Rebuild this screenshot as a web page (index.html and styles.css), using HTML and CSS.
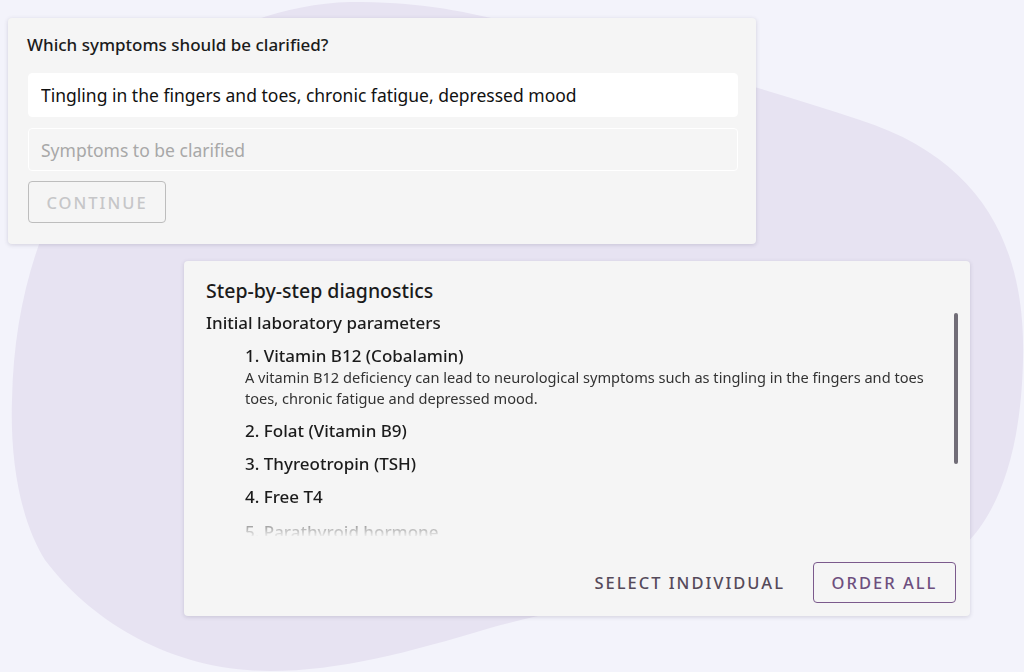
FILE: index.html
```html
<!DOCTYPE html>
<html lang="en">

<head>
    <meta charset="UTF-8">
    <title>Diagnostics assistant</title>
    <link rel="stylesheet" href="styles.css">
</head>

<body>
    <!-- Decorative background blob -->
    <svg class="blob" width="1024" height="672" viewBox="0 0 1024 672" aria-hidden="true">
        <path d="M 350 2 C 420 2, 460 10, 520 25 C 640 55, 740 80, 860 120 C 985 160, 1026 250, 1023 360 C 1021 450, 1000 510, 965 545 C 850 590, 640 585, 490 628 C 410 652, 340 671, 270 671 C 170 671, 90 620, 45 560 C 20 520, 10 460, 12 400 C 14 300, 40 220, 90 140 C 150 60, 250 5, 350 2 Z" fill="#e7e3f2"/>
    </svg>

    <!-- Symptoms card -->
    <div class="card symptoms">
        <h3 class="question">Which symptoms should be clarified?</h3>
        <input class="field filled" type="text" value="Tingling in the fingers and toes, chronic fatigue, depressed mood">
        <input class="field empty" type="text" placeholder="Symptoms to be clarified">
        <button class="btn-continue" disabled>CONTINUE</button>
    </div>

    <!-- Diagnostics card -->
    <div class="card diagnostics">
        <h2 class="diag-title">Step-by-step diagnostics</h2>
        <div class="scroll-area">
            <h4 class="group-title">Initial laboratory parameters</h4>
            <ol class="tests">
                <li>
                    <div class="test-name">1. Vitamin B12 (Cobalamin)</div>
                    <p class="test-desc">A vitamin B12 deficiency can lead to neurological symptoms such as tingling in the fingers and toes toes, chronic fatigue and depressed mood.</p>
                </li>
                <li><div class="test-name">2. Folat (Vitamin B9)</div></li>
                <li><div class="test-name">3. Thyreotropin (TSH)</div></li>
                <li><div class="test-name">4. Free T4</div></li>
                <li><div class="test-name">5. Parathyroid hormone</div></li>
            </ol>
        </div>
        <div class="scroll-thumb"></div>
        <div class="actions">
            <button class="btn-text">SELECT INDIVIDUAL</button>
            <button class="btn-outline">ORDER ALL</button>
        </div>
    </div>
</body>

</html>
```

FILE: styles.css
```css
/* Basic reset and styling */

* {
    margin: 0;
    padding: 0;
    box-sizing: border-box;
}

body {
    font-family: "Noto Sans", "Open Sans", sans-serif;
    background-color: #f3f3fb;
    color: #1b1b1b;
    width: 1024px;
    height: 672px;
    overflow: hidden;
    position: relative;
    padding-top: 18px;
}

.blob {
    position: absolute;
    left: 0;
    top: 0;
    z-index: 0;
}

.card {
    position: relative;
    z-index: 1;
    background: #f5f5f5;
    border-radius: 4px;
    box-shadow: 0 1px 4px rgba(60, 50, 90, 0.18);
}

/* Symptoms card */

.symptoms {
    width: 748px;
    margin-left: 8px;
    padding: 15px 18px 21px 20px;
    display: flex;
    flex-direction: column;
}

.question {
    font-size: 17px;
    font-weight: 500;
    line-height: 24px;
    margin-left: -1px;
    margin-bottom: 16px;
}

.field {
    font-family: inherit;
    font-size: 17.5px;
    height: 44px;
    padding: 0 12px;
    border-radius: 4px;
    outline: none;
    color: #111;
}

.field.filled {
    background: #fff;
    border: 1px solid #fff;
    margin-bottom: 11px;
}

.field.empty {
    background: transparent;
    border: 1px solid #fff;
    height: 43px;
    margin-bottom: 10px;
}

.field.empty::placeholder {
    color: #a8a8a8;
}

.btn-continue {
    align-self: flex-start;
    width: 138px;
    height: 42px;
    font-family: inherit;
    font-size: 16.5px;
    font-weight: 500;
    letter-spacing: 2px;
    color: #c6c6c8;
    background: transparent;
    border: 1px solid #bdbdbd;
    border-radius: 4px;
}

/* Diagnostics card */

.diagnostics {
    width: 786px;
    height: 355px;
    margin: 17px 0 0 184px;
    padding: 17px 14px 13px 22px;
    display: flex;
    flex-direction: column;
}

.diag-title {
    font-size: 19.5px;
    font-weight: 500;
    line-height: 26px;
    margin-bottom: 7px;
}

.scroll-area {
    height: 225px;
    overflow: hidden;
    padding-right: 20px;
    -webkit-mask-image: linear-gradient(to bottom, #000 196px, rgba(0, 0, 0, 0.05) 225px);
    mask-image: linear-gradient(to bottom, #000 196px, rgba(0, 0, 0, 0.05) 225px);
}

.group-title {
    font-size: 17px;
    font-weight: 500;
    line-height: 24px;
}

.tests {
    list-style: none;
    padding-left: 39px;
}

.tests li {
    margin-top: 11px;
}

.tests li:first-child {
    margin-top: 10px;
}

.tests li:last-child {
    margin-top: 13px;
}

.test-name {
    font-size: 17px;
    font-weight: 500;
    line-height: 22px;
}

.test-desc {
    font-size: 14.6px;
    line-height: 21px;
    color: #333;
}

.scroll-thumb {
    position: absolute;
    top: 52px;
    right: 12px;
    width: 4px;
    height: 151px;
    border-radius: 2px;
    background: #716d77;
}

.actions {
    margin-top: auto;
    display: flex;
    justify-content: flex-end;
    align-items: center;
    gap: 28px;
}

.btn-text,
.btn-outline {
    font-family: inherit;
    font-size: 16.5px;
    font-weight: 500;
    letter-spacing: 2px;
    background: transparent;
    height: 41px;
    border-radius: 4px;
    cursor: pointer;
}

.btn-text {
    border: none;
    color: #554a5a;
}

.btn-outline {
    width: 143px;
    border: 1px solid #7b5a8c;
    color: #6d4f7e;
}
```
